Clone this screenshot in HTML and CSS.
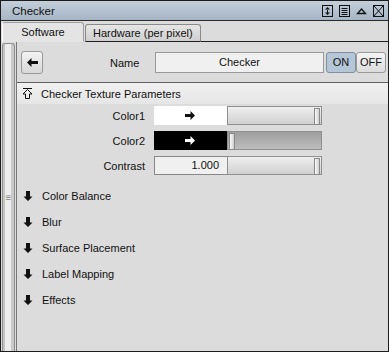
FILE: index.html
```html
<!DOCTYPE html>
<html lang="en">
<head>
  <meta charset="UTF-8">
  <title>Checker</title>
  <link rel="stylesheet" href="styles.css">
</head>
<body>
  <div class="window">
    <div class="titlebar">
      <span class="title">Checker</span>
      <div class="tb-icons">
        <svg width="11" height="12" viewBox="0 0 11 12"><rect x="0.5" y="0.5" width="10" height="11" fill="none" stroke="#111"/><path d="M5.5 2 L3 4.5 H8 Z M5.5 10 L3 7.5 H8 Z M5 4 h1 v4 h-1 z" fill="#111"/></svg>
        <svg width="11" height="12" viewBox="0 0 11 12"><rect x="0.5" y="0.5" width="10" height="11" fill="none" stroke="#111"/><path d="M2.5 3.5 H8.5 M2.5 5.5 H8.5 M2.5 7.5 H8.5 M2.5 9.5 H8.5" stroke="#111"/></svg>
        <svg width="11" height="12" viewBox="0 0 11 12"><path d="M5.5 4 L9.5 8.5 H1.5 Z" fill="none" stroke="#111" stroke-width="1.3"/></svg>
        <svg width="11" height="12" viewBox="0 0 11 12"><rect x="0.5" y="0.5" width="10" height="11" fill="none" stroke="#111"/><path d="M1 1 L10 11 M10 1 L1 11" stroke="#111"/></svg>
      </div>
    </div>

    <div class="tabs">
      <div class="tab active">Software</div>
      <div class="tab">Hardware (per pixel)</div>
      <div class="tab-fill"></div>
    </div>

    <div class="body">
      <div class="scrollbar"><span class="grip">&#8801;</span></div>
      <div class="content">
        <div class="name-row">
          <button class="back">
            <svg width="11" height="9" viewBox="0 0 11 9"><path d="M0 4.5 L4.5 0 V3 H11 V6 H4.5 V9 Z" fill="#111"/></svg>
          </button>
          <span class="name-label">Name</span>
          <div class="name-field">Checker</div>
          <div class="toggle">
            <span class="on">ON</span><span class="off">OFF</span>
          </div>
        </div>

        <div class="section-head">
          <svg class="sec-icon" width="11" height="11" viewBox="0 0 11 11"><path d="M1 0.5 H10 M5.5 1.5 L1 6 H3.5 V10.5 H7.5 V6 H10 Z" fill="none" stroke="#111"/></svg>
          <span>Checker Texture Parameters</span>
        </div>

        <div class="params">
          <div class="row">
            <span class="label">Color1</span>
            <div class="swatch white">
              <svg width="10" height="9" viewBox="0 0 10 9"><path d="M10 4.5 L5.5 0 V3 H0 V6 H5.5 V9 Z" fill="#111"/></svg>
            </div>
            <div class="slider"><span class="handle end"></span></div>
          </div>
          <div class="row">
            <span class="label">Color2</span>
            <div class="swatch black">
              <svg width="10" height="9" viewBox="0 0 10 9"><path d="M10 4.5 L5.5 0 V3 H0 V6 H5.5 V9 Z" fill="#fff"/></svg>
            </div>
            <div class="slider dark"><span class="handle start"></span></div>
          </div>
          <div class="row">
            <span class="label">Contrast</span>
            <div class="numfield">1.000</div>
            <div class="slider"><span class="handle end"></span></div>
          </div>
        </div>

        <div class="collapsed">
          <div class="fold"><svg width="10" height="10" viewBox="0 0 10 10"><path d="M5 10 L0.5 5.5 H3 V0 H7 V5.5 H9.5 Z" fill="#111"/></svg><span>Color Balance</span></div>
          <div class="fold"><svg width="10" height="10" viewBox="0 0 10 10"><path d="M5 10 L0.5 5.5 H3 V0 H7 V5.5 H9.5 Z" fill="#111"/></svg><span>Blur</span></div>
          <div class="fold"><svg width="10" height="10" viewBox="0 0 10 10"><path d="M5 10 L0.5 5.5 H3 V0 H7 V5.5 H9.5 Z" fill="#111"/></svg><span>Surface Placement</span></div>
          <div class="fold"><svg width="10" height="10" viewBox="0 0 10 10"><path d="M5 10 L0.5 5.5 H3 V0 H7 V5.5 H9.5 Z" fill="#111"/></svg><span>Label Mapping</span></div>
          <div class="fold"><svg width="10" height="10" viewBox="0 0 10 10"><path d="M5 10 L0.5 5.5 H3 V0 H7 V5.5 H9.5 Z" fill="#111"/></svg><span>Effects</span></div>
        </div>
      </div>
    </div>
  </div>
</body>
</html>
```

FILE: styles.css
```css
body {
  margin: 0;
  font-family: 'Liberation Sans', Arial, sans-serif;
  font-size: 11px;
  color: #111;
  background: #dcdcdc;
}
.window {
  width: 389px;
  height: 352px;
  box-sizing: border-box;
  border: 1px solid #1c1c1c;
  background: #dcdcdc;
  display: flex;
  flex-direction: column;
}
.titlebar {
  height: 19px;
  border-bottom: 1px solid #2a2a2a;
  background: linear-gradient(#c3ced9, #a6b5c6);
  display: flex;
  align-items: center;
  padding-left: 11px;
  padding-right: 4px;
}
.title {
  flex: 1;
  font-size: 11.5px;
}
.tb-icons {
  display: flex;
  gap: 6px;
  align-items: center;
}
.tb-icons svg {
  display: block;
}
.tabs {
  height: 21px;
  display: flex;
  align-items: flex-end;
  padding-left: 1px;
}
.tab {
  height: 16px;
  line-height: 16px;
  padding: 0 7px;
  border: 1px solid #8a8a8a;
  border-bottom: 1px solid #222;
  border-radius: 3px 3px 0 0;
  background: linear-gradient(#e6e6e6, #cfcfcf);
  margin-left: 1px;
}
.tab.active {
  width: 64px;
  padding: 0 8px;
  height: 18px;
  line-height: 19px;
  text-align: center;
  background: #e4e4e4;
  border-color: #a0a0a0;
  border-bottom-color: #e4e4e4;
  border-left-color: #fff;
  margin-left: 0;
}
.tab-fill {
  flex: 1;
  border-bottom: 1px solid #222;
}
.body {
  flex: 1;
  display: flex;
  min-height: 0;
}
.scrollbar {
  width: 11px;
  margin: 1px 1px 0 1px;
  border: 1px solid #8e8e8e;
  border-bottom: none;
  border-radius: 3px 3px 0 0;
  background: linear-gradient(90deg, #c4c4c4 0 2px, #ececec 2px 8px, #c9c9c9 8px);
  display: flex;
  align-items: center;
  justify-content: center;
}
.grip {
  color: #888;
  font-size: 10px;
}
.content {
  flex: 1;
  border-left: 1px solid #777;
}
.name-row {
  height: 40px;
  display: flex;
  align-items: center;
  padding-left: 4px;
  padding-top: 1px;
  box-sizing: border-box;
}
.back {
  width: 22px;
  height: 23px;
  border: 1px solid #999;
  border-radius: 3px;
  background: linear-gradient(#f2f2f2, #d8d8d8);
  display: flex;
  align-items: center;
  justify-content: center;
  padding: 0;
}
.name-label {
  margin-left: 67px;
  width: 45px;
}
.name-field {
  width: 167px;
  height: 19px;
  line-height: 19px;
  border: 1px solid #999;
  background: #f0f0f0;
  text-align: center;
}
.toggle {
  display: flex;
  margin-left: 2px;
}
.toggle span {
  width: 28px;
  height: 19px;
  line-height: 19px;
  text-align: center;
  border: 1px solid #999;
  border-radius: 3px;
}
.toggle .on {
  background: #b5c6d6;
  border-color: #7f8f9f;
}
.toggle .off {
  background: linear-gradient(#f4f4f4, #dcdcdc);
}
.section-head {
  height: 21px;
  border-top: 1px solid #5e5e5e;
  background: linear-gradient(#f0f0f0, #e6e6e6);
  display: flex;
  align-items: center;
  padding-left: 5px;
}
.sec-icon {
  margin-right: 8px;
}
.params {
  padding-top: 2px;
  display: flex;
  flex-direction: column;
  gap: 6px;
}
.row {
  display: flex;
  align-items: center;
  height: 19px;
}
.label {
  width: 128px;
  text-align: right;
  padding-right: 9px;
}
.swatch {
  width: 73px;
  height: 19px;
  box-sizing: border-box;
  display: flex;
  align-items: center;
  justify-content: center;
  padding-right: 2px;
}
.swatch.white {
  background: #fff;
}
.swatch.black {
  background: #000;
}
.numfield {
  width: 73px;
  height: 19px;
  box-sizing: border-box;
  border: 1px solid #888;
  border-right: none;
  background: #f0f0f0;
  text-align: right;
  line-height: 17px;
  padding-right: 8px;
}
.slider {
  position: relative;
  width: 95px;
  height: 19px;
  box-sizing: border-box;
  border: 1px solid #909090;
  background: linear-gradient(#efefef, #d0d0d0);
}
.slider.dark {
  background: linear-gradient(#9f9f9f, #bdbdbd);
}
.handle {
  position: absolute;
  top: 1px;
  width: 4px;
  height: 15px;
  border: 1px solid #888;
  background: linear-gradient(90deg, #fafafa, #cfcfcf);
}
.handle.end {
  right: 1px;
}
.handle.start {
  left: 1px;
}
.collapsed {
  padding-top: 8px;
}
.fold {
  height: 26px;
  display: flex;
  align-items: center;
  padding-left: 6px;
}
.fold svg {
  margin-right: 9px;
}
```
